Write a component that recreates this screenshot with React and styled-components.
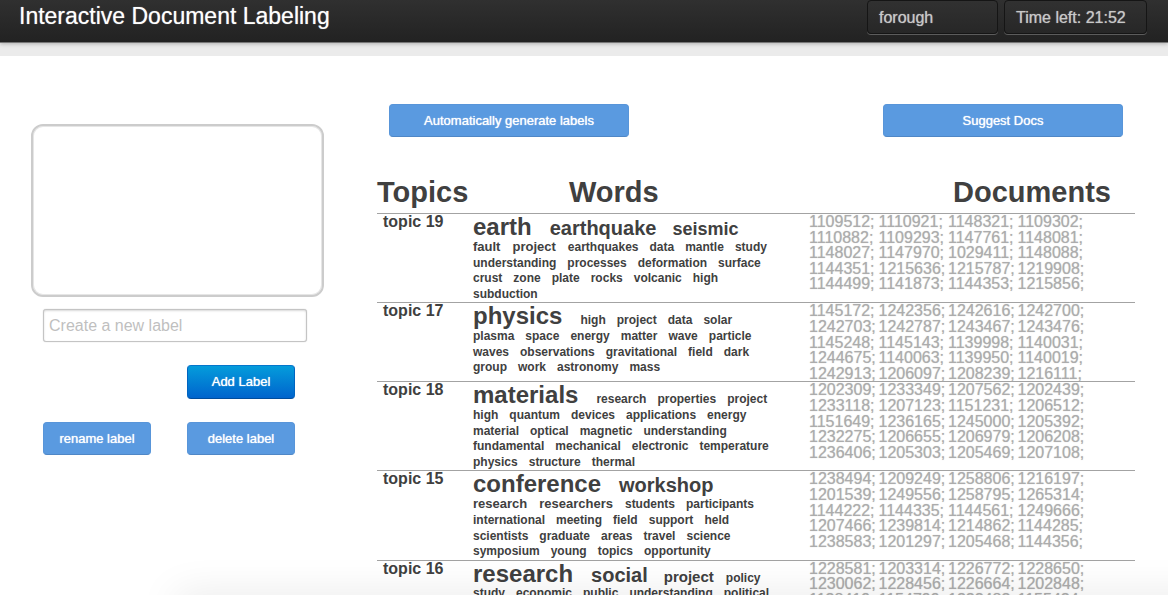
import React from "react";
import styled, { createGlobalStyle } from "styled-components";

const GlobalStyle = createGlobalStyle`
  *, *::before, *::after { box-sizing: border-box; }
  body {
    margin: 0;
    background: #fff;
    color: #404040;
    font-family: "Liberation Sans", Helvetica, Arial, sans-serif;
    font-size: 16px;
  }
`;

const Page = styled.div`
  height: 100vh;
  overflow: hidden;
  display: flex;
  flex-direction: column;
`;

const TopBar = styled.header`
  position: relative;
  z-index: 1;
  flex: none;
  display: flex;
  justify-content: space-between;
  align-items: flex-start;
  height: 43px;
  padding: 0 21px 0 19px;
  background: linear-gradient(#303030, #222);
  border-bottom: 1px solid #777;
  box-shadow: 0 1px 4px rgba(0, 0, 0, 0.25);
`;

const Brand = styled.h1`
  margin: 0;
  padding-top: 2px;
  font-size: 23px;
  line-height: 28px;
  font-weight: 400;
  color: #fff;
  text-shadow: 0 0 1px rgba(255, 255, 255, 0.6);
`;

const Badges = styled.div`
  display: flex;
  gap: 6px;
`;

const Badge = styled.div`
  width: ${(p) => p.$width}px;
  height: 34px;
  padding: 0 11px;
  border: 1px solid #151515;
  border-radius: 4px;
  background: linear-gradient(#313131, #272727);
  box-shadow: 0 1px 0 #5c5c5c;
  color: #c8c8c8;
  font-size: 16px;
  line-height: 34px;
  text-shadow: 0 0 1px rgba(200, 200, 200, 0.8);
  white-space: nowrap;
`;

const Band = styled.div`
  flex: none;
  height: 13px;
  background: #ebebeb;
`;

const Content = styled.main`
  display: grid;
  grid-template-columns: 293px minmax(0, 1fr);
  column-gap: 53px;
  padding: 48px 33px 0 31px;
`;

const Sidebar = styled.aside`
  padding-top: 20px;
`;

const LabelList = styled.div`
  height: 173px;
  border: 2px solid #ccc;
  border-radius: 12px;
  box-shadow: inset 0 0 0 1px #e6e6e6;
`;

const LabelForm = styled.form`
  display: grid;
  grid-template-columns: 108px 120px;
  column-gap: 36px;
  row-gap: 23px;
  margin: 12px 16px 0 12px;
`;

const LabelInput = styled.input`
  grid-column: 1 / -1;
  width: 100%;
  height: 33px;
  padding: 0 5px;
  border: 1px solid #c4c4c4;
  border-radius: 3px;
  box-shadow: inset 0 1px 2px rgba(0, 0, 0, 0.15), 0 0 1px #bbb;
  background: #fff;
  color: #404040;
  font: inherit;
  &::placeholder { color: #bfbfbf; opacity: 1; }
`;

const Button = styled.button`
  height: 33px;
  width: ${(p) => (p.$wide ? "240px" : "108px")};
  padding: 0;
  border: 1px solid #5895d9;
  border-bottom-color: #4f87c6;
  border-radius: 4px;
  background: #5a9ae0;
  color: #fff;
  font: 13px/18px "Liberation Sans", Helvetica, Arial, sans-serif;
  text-shadow: 0 0 1px #fff;
  white-space: nowrap;
`;

const PrimaryButton = styled(Button)`
  grid-column: 2;
  height: 34px;
  border-color: #0576cc #0064c0 #004c9c;
  background: linear-gradient(#049cdb, #0064cd);
`;

const Actions = styled.div`
  display: flex;
  justify-content: space-between;
  padding: 0 12px;
`;

const TopicTable = styled.table`
  width: 100%;
  margin-top: 36px;
  table-layout: fixed;
  border-collapse: separate;
  border-spacing: 0;
  font-size: 13px;
  line-height: 1.2em;
`;

const HeadCell = styled.th`
  width: ${(p) => p.$width};
  height: 40px;
  padding: 0 0 0 ${(p) => p.$indent || 0}px;
  font-size: 29px;
  line-height: 38px;
  text-align: left;
  vertical-align: top;
`;

const TopicCell = styled.th`
  padding: 0 6px;
  border-top: 1px solid #a3a3a3;
  font-size: 16px;
  text-align: left;
  vertical-align: top;
`;

const Cell = styled.td`
  padding: 0 6px;
  border-top: 1px solid #a3a3a3;
  vertical-align: top;
`;

const WordLine = styled.div`
  display: flex;
  align-items: baseline;
  white-space: nowrap;
`;

const gapAfter = (size) => {
  if (size > 22) return 18;
  if (size > 16) return 16;
  return size > 12 ? 12 : 11;
};

const Word = styled.span`
  margin-right: ${(p) => gapAfter(p.$size)}px;
  font-size: ${(p) => p.$size}px;
  font-weight: 700;
  line-height: ${(p) => (p.$size > 22 ? "25px" : "inherit")};
`;

const Docs = styled.div`
  display: grid;
  grid-template-columns: repeat(4, 1fr);
  width: 278px;
  color: #acacac;
  font-size: 16px;
  text-shadow: 0 0 1px rgba(172, 172, 172, 0.7);
`;

const BottomShade = styled.div`
  position: fixed;
  left: 180px;
  right: -40px;
  bottom: -24px;
  height: 20px;
  box-shadow: 0 0 40px 4px rgba(0, 0, 0, 0.1);
  pointer-events: none;
`;

/* A number after a colon is the word's weight in pixels; plain words are 12. */
const TOPICS = [
  {
    name: "topic 19",
    words: [
      "earth:24 earthquake:20 seismic:18",
      "fault:13 project:13 earthquakes data mantle study",
      "understanding processes deformation surface",
      "crust zone plate rocks volcanic high",
      "subduction",
    ],
    docs: "1109512 1110921 1148321 1109302 1110882 1109293 1147761 1148081 1148027 1147970 1029411 1148088 1144351 1215636 1215787 1219908 1144499 1141873 1144353 1215856",
  },
  {
    name: "topic 17",
    words: [
      "physics:24 high project data solar",
      "plasma space energy matter wave particle",
      "waves observations gravitational field dark",
      "group work astronomy mass",
    ],
    docs: "1145172 1242356 1242616 1242700 1242703 1242787 1243467 1243476 1145248 1145143 1139998 1140031 1244675 1140063 1139950 1140019 1242913 1206097 1208239 1216111",
  },
  {
    name: "topic 18",
    words: [
      "materials:24 research properties project",
      "high quantum devices applications energy",
      "material optical magnetic understanding",
      "fundamental mechanical electronic temperature",
      "physics structure thermal",
    ],
    docs: "1202309 1233349 1207562 1202439 1233118 1207123 1151231 1206512 1151649 1236165 1245000 1205392 1232275 1206655 1206979 1206208 1236406 1205303 1205469 1207108",
  },
  {
    name: "topic 15",
    words: [
      "conference:24 workshop:20",
      "research:13 researchers:13 students participants",
      "international meeting field support held",
      "scientists graduate areas travel science",
      "symposium young topics opportunity",
    ],
    docs: "1238494 1209249 1258806 1216197 1201539 1249556 1258795 1265314 1144222 1144335 1144561 1249666 1207466 1239814 1214862 1144285 1238583 1201297 1205468 1144356",
  },
  {
    name: "topic 16",
    words: [
      "research:24 social:20 project:15 policy",
      "study economic public understanding political",
    ],
    docs: "1228581 1203314 1226772 1228650 1230062 1228456 1226664 1202848 1138419 1154799 1222483 1155424",
  },
];

function TopicRow({ topic }) {
  return (
    <tr>
      <TopicCell scope="row">{topic.name}</TopicCell>
      <Cell>
        {topic.words.map((line) => (
          <WordLine key={line}>
            {line.split(" ").map((entry) => {
              const [text, size] = entry.split(":");
              return (
                <Word key={text} $size={Number(size || 12)}>
                  {text}
                </Word>
              );
            })}
          </WordLine>
        ))}
      </Cell>
      <Cell>
        <Docs>
          {topic.docs.split(" ").map((id) => (
            <span key={id}>{id};</span>
          ))}
        </Docs>
      </Cell>
    </tr>
  );
}

export default function App() {
  return (
    <Page>
      <GlobalStyle />
      <TopBar>
        <Brand>Interactive Document Labeling</Brand>
        <Badges>
          <Badge $width={131}>forough</Badge>
          <Badge $width={143}>Time left: 21:52</Badge>
        </Badges>
      </TopBar>
      <Band />
      <Content>
        <Sidebar>
          <LabelList />
          <LabelForm onSubmit={(e) => e.preventDefault()}>
            <LabelInput type="text" aria-label="Create a new label" placeholder="Create a new label" />
            <PrimaryButton type="submit">Add Label</PrimaryButton>
            <Button type="button">rename label</Button>
            <Button type="button">delete label</Button>
          </LabelForm>
        </Sidebar>
        <section>
          <Actions>
            <Button type="button" $wide>Automatically generate labels</Button>
            <Button type="button" $wide>Suggest Docs</Button>
          </Actions>
          <TopicTable>
            <thead>
              <tr>
                <HeadCell scope="col" $width="90px">Topics</HeadCell>
                <HeadCell scope="col" $width="336px" $indent={102}>Words</HeadCell>
                <HeadCell scope="col" $width="auto" $indent={150}>Documents</HeadCell>
              </tr>
            </thead>
            <tbody>
              {TOPICS.map((topic) => (
                <TopicRow key={topic.name} topic={topic} />
              ))}
            </tbody>
          </TopicTable>
        </section>
      </Content>
      <BottomShade />
    </Page>
  );
}
